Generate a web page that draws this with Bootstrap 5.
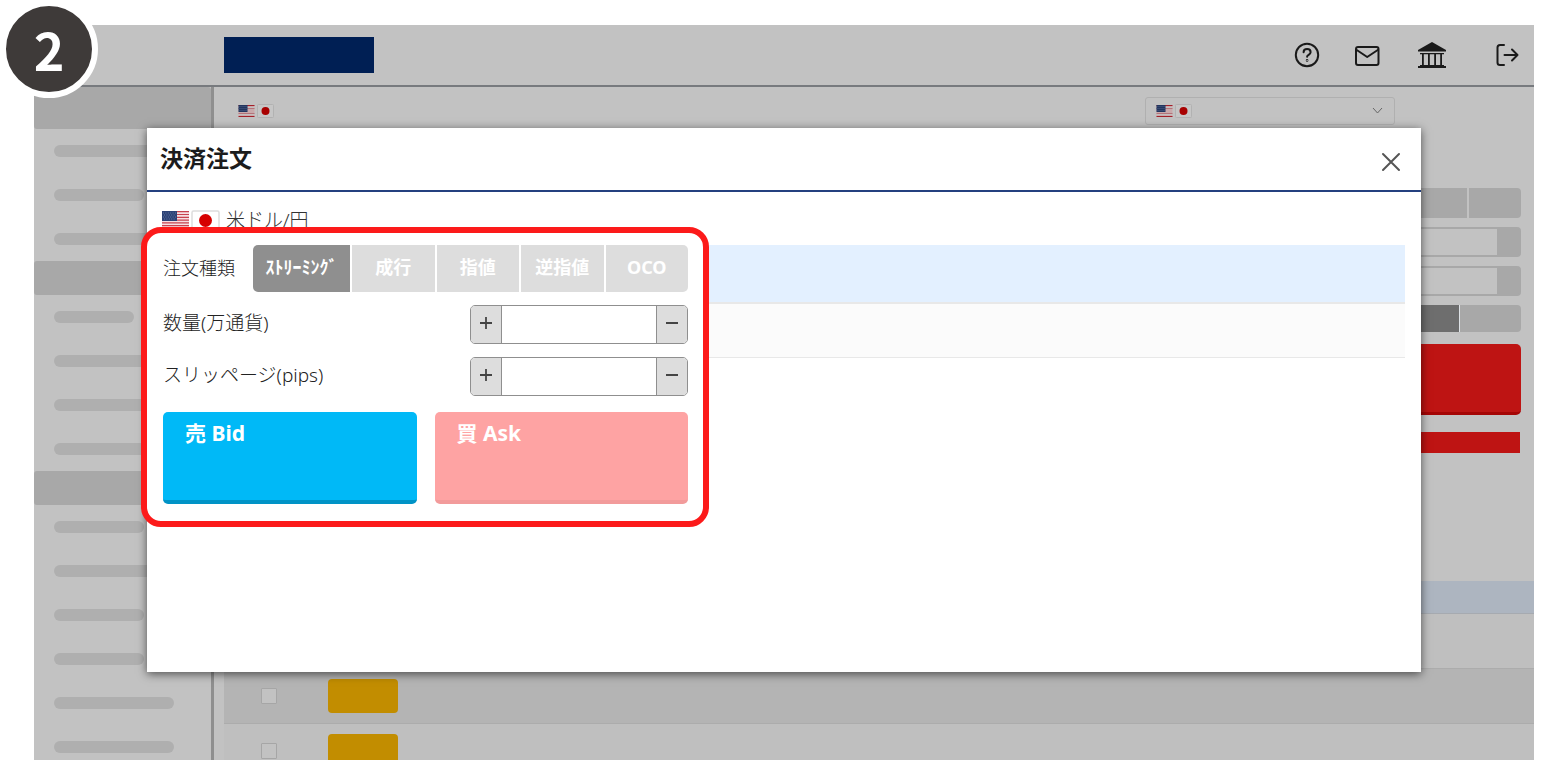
<!DOCTYPE html>
<html lang="ja">
<head>
<meta charset="utf-8">
<meta name="viewport" content="width=device-width, initial-scale=1">
<title>決済注文</title>
<link href="https://cdn.jsdelivr.net/npm/bootstrap@5.3.0/dist/css/bootstrap.min.css" rel="stylesheet">
<style>
  body { background: #fff; color: #333; font-family: "Noto Sans", "Noto Sans CJK JP", sans-serif; font-size: 18px; line-height: 24px; }
  button { font-family: inherit; }
  .stage { height: 100vh; padding: 25px 16px 0 34px; }
  .app { background: #c2c2c2; }
  .app-header { height: 62px; border-bottom: 2px solid #777a7e; padding: 0 15px 0 190px; }
  .brand-block { width: 150px; height: 36px; background: #001f54; }
  .tools { gap: 34px; }
  .tool-icon { color: #1a1a1a; line-height: 0; }
  .tool-bank { margin: 0 15px 0 4px; }

  /* sidebar */
  .side-col { width: 180px; border-right: 3px solid #8f8f8f; }
  .side-head { height: 34px; background: #a8a8a8; border-radius: 3px; }
  .side-head-first { height: 42px; }
  .side-group { gap: 32px; padding: 16px 20px; }
  .side-item { height: 12px; width: 120px; border-radius: 6px; background: #afafaf; }
  .side-item-md { width: 90px; }
  .side-item-sm { width: 80px; }

  /* trading area */
  .pair-bar { height: 48px; padding: 0 139px 0 24px; }
  .flags { gap: 2px; }
  .pair-select { width: 250px; height: 28px; border: 1px solid #b0b0b0; border-radius: 3px; background: transparent; appearance: none; }
  .pair-flags { left: 11px; top: 7px; pointer-events: none; }
  .pair-arrow { right: 12px; top: 10px; line-height: 0; pointer-events: none; }
  .trade-col { width: 300px; padding: 53px 13px 0 0; }
  .trade-body { height: 446px; }
  .trade-row { margin-bottom: 9px; gap: 2px; }
  .seg { background: #a8a8a8; border: 0; height: 30px; }
  .seg-low { height: 27px; }
  .seg-on { background: #6e6e6e; }
  .seg-end { width: 52px; border-radius: 0 4px 4px 0; }
  .seg-end-wide { width: 62px; border-radius: 0 4px 4px 0; }
  .field-row { height: 30px; border: 2px solid #a8a8a8; border-radius: 4px; background: #a8a8a8; padding-right: 22px; }
  .field-row input { border: 0; background: #c2c2c2; }
  .ask-big { height: 71px; border: 0; border-bottom: 3px solid #a50505; border-radius: 5px; background: #be1413; margin: 12px 0 17px; }
  .ask-strip { height: 21px; background: #be1413; margin-right: 1px; }

  /* positions table */
  .pos-wrap { padding-left: 10px; }
  .pos-table { border-collapse: separate; border-spacing: 0; }
  .pos-table th { height: 33px; background: #adb5c0; border-bottom: 1px solid #a6aab0; padding: 0; }
  .pos-table td { height: 55px; background: #bfbfbf; border-bottom: 1px solid #acacac; padding: 0; vertical-align: middle; }
  .pos-table tr:nth-child(even) td { background: #b4b4b4; }
  .pos-check-cell { width: 90px; text-align: center; }
  .pos-check { appearance: none; width: 16px; height: 16px; border: 1px solid #a6a6a6; border-radius: 1px; background: #c2c2c2; display: block; margin: 0 auto; }
  .settle { display: block; width: 70px; height: 34px; border: 0; border-radius: 4px; background: #c28d00; margin-left: 14px; }

  /* dialog over the trading area */
  .dialog { top: 103px; left: 113px; right: 113px; background: #fff; box-shadow: 0 2px 9px rgba(0,0,0,.6); }
  .dialog-head { height: 64px; border-bottom: 2px solid #24407f; padding: 0 20px 0 13px; }
  .dialog-title { font-size: 23px; line-height: 30px; color: #1c1c1c; padding-bottom: 2px; }
  .close-btn { border: 0; background: none; padding: 5px 0 0; line-height: 0; }
  .dialog-body { min-height: 480px; padding: 16px 16px 0 15px; }
  .pair-name { height: 24px; gap: 2px; font-size: 19px; }
  .info-list { margin-top: 13px; }
  .info-row { height: 59px; background: #e3f0ff; border-bottom: 2px solid #e8e8e8; }
  .info-row-plain { height: 54px; background: #fbfbfb; border-bottom-width: 1px; }

  /* highlighted order form */
  .order-form { top: 35px; left: -6px; width: 568px; border: 6px solid #fc1a1a; border-radius: 20px; background: #fff; padding: 12px 15px 17px 16px; }
  .order-row { margin-bottom: 13px; }
  .order-label { color: #222; font-size: 19px; font-weight: 300; padding-bottom: 3px; }
  .order-label-type { font-size: 18px; padding-bottom: 1px; }
  .tabs { width: 435px; gap: 2px; }
  .tab-btn { height: 47px; border: 0; padding: 0 0 3px; background: #ddd; color: #fff; font-weight: 700; }
  .tab-on { flex: 0 0 97px; background: #8f8f8f; border-radius: 5px 0 0 5px; }
  .tab-last { border-radius: 0 5px 5px 0; }
  .stepper { width: 218px; height: 39px; border: 1px solid #8f8f8f; border-radius: 5px; overflow: hidden; }
  .stepper button { flex: 0 0 30px; border: 0; background: #ddd; padding: 0 0 4px; line-height: 0; }
  .stepper input { border: 0; border-left: 1px solid #8f8f8f; border-right: 1px solid #8f8f8f; min-width: 0; }
  .quotes { gap: 18px; margin-top: 16px; }
  .quote-btn { height: 92px; border: 0; border-radius: 5px; color: #fff; font-size: 21px; line-height: 24px; font-weight: 700; padding: 9px 22px; }
  .quote-bid { background: #00b9f7; border-bottom: 4px solid #0093c6; }
  .quote-ask { background: #fea3a3; border-bottom: 4px solid #f29b9b; }

  .step-badge { left: 0; top: 0; width: 98px; height: 98px; border: 6px solid #fff; border-radius: 50%; background: #3e3a39; color: #fff; font: 700 52px/52px "Noto Sans CJK JP", sans-serif; }
</style>
</head>
<body>
<svg width="0" height="0" class="position-absolute" aria-hidden="true">
  <symbol id="us" viewBox="0 0 27 18">
    <rect width="27" height="18" fill="#f6dfe2"/>
    <path d="M0 .7h27M0 3.5h27M0 6.3h27M0 9.1h27M0 11.9h27M0 14.7h27M0 17.4h27" stroke="#c8434f" stroke-width="1.2"/>
    <rect width="15" height="10" fill="#2c4276"/>
    <path d="M1 2h13M2 4h12M1 6h13M2 8h12" stroke="#7485ac" stroke-width=".8" stroke-dasharray="1 1.4"/>
  </symbol>
  <symbol id="us-dim" viewBox="0 0 16 12">
    <rect width="16" height="12" fill="#c9a9ab"/>
    <path d="M0 .5h16M0 11.500h16" stroke="#a32029"/>
    <path d="M0 3.500h16M0 8.500h16" stroke="#b4747a"/>
    <path d="M9 2.500h7M0 9.500h16" stroke="#c4bfc0"/>
    <rect width="9" height="7" fill="#22355f"/>
    <path d="M1 1.500h8M0 3.500h9M1 5.500h8" stroke="#4b5f86" stroke-dasharray="1 1"/>
  </symbol>
</svg>

<div class="stage position-relative overflow-hidden">
  <div class="app position-relative h-100 d-flex flex-column">
    <header class="app-header d-flex align-items-center justify-content-between flex-shrink-0">
      <div class="brand-block"></div>
      <nav class="tools d-flex align-items-center">
        <a href="#" class="tool-icon" aria-label="ヘルプ"><svg width="26" height="26" viewBox="0 0 26 26" fill="none" stroke="currentColor" stroke-width="2" stroke-linecap="round"><circle cx="13" cy="13" r="11.200"/><path d="M9.600 10.200c0-4.200 7-4.200 7 0 0 2.600-3.500 2.500-3.500 4.500"/><circle cx="13.100" cy="18.400" r=".3"/></svg></a>
        <a href="#" class="tool-icon" aria-label="メール"><svg width="26" height="24" viewBox="0 0 26 24" fill="none" stroke="currentColor" stroke-width="2" stroke-linejoin="round"><rect x="2" y="4" width="22.500" height="18" rx="2"/><path d="M2 6.500l11.200 7.500 11.300-7.500"/></svg></a>
        <a href="#" class="tool-icon tool-bank" aria-label="入出金"><svg width="28" height="28" viewBox="0 0 28 28" fill="currentColor"><path d="M14 1L28 9v1.500H0V9zM2 12h24v1.200H2zM4 13h1.800v11H4zM10 13h1.800v11H10zM16.200 13H18v11h-1.800zM22.200 13H24v11h-1.800zM2 24h24v1h2v2H0v-2h2z"/></svg></a>
        <a href="#" class="tool-icon" aria-label="ログアウト"><svg width="24" height="24" viewBox="0 0 24 24" fill="none" stroke="currentColor" stroke-width="2" stroke-linecap="round" stroke-linejoin="round"><path d="M9 2H5Q2.500 2 2.500 4.500v15Q2.500 22 5 22h4M9.500 12h13M17 6.500l5.500 5.500-5.500 5.500"/></svg></a>
      </nav>
    </header>

    <div class="d-flex flex-grow-1 overflow-hidden">
      <aside class="side-col flex-shrink-0">
        <div class="side-head side-head-first"></div>
        <div class="side-group d-flex flex-column">
          <div class="side-item"></div><div class="side-item side-item-md"></div><div class="side-item"></div>
        </div>
        <div class="side-head"></div>
        <div class="side-group d-flex flex-column">
          <div class="side-item side-item-sm"></div><div class="side-item"></div><div class="side-item"></div><div class="side-item"></div>
        </div>
        <div class="side-head"></div>
        <div class="side-group d-flex flex-column">
          <div class="side-item side-item-md"></div><div class="side-item"></div><div class="side-item side-item-md"></div><div class="side-item side-item-md"></div><div class="side-item"></div><div class="side-item"></div>
        </div>
      </aside>

      <main class="flex-grow-1">
        <div class="pair-bar d-flex align-items-center justify-content-between">
          <div class="flags d-flex align-items-center">
            <svg width="17" height="12"><use href="#us-dim"/></svg>
            <svg width="17" height="14" viewBox="0 0 17 14"><rect x=".5" y=".5" width="16" height="13" rx="1" fill="#c6c6c6" stroke="#b2b2b2"/><circle cx="8.500" cy="7" r="4" fill="#a80000"/></svg>
          </div>
          <div class="position-relative">
            <select class="pair-select d-block" aria-label="通貨ペア"><option></option></select>
            <span class="pair-flags flags d-flex align-items-center position-absolute">
              <svg width="17" height="12"><use href="#us-dim"/></svg>
              <svg width="17" height="14" viewBox="0 0 17 14"><rect x=".5" y=".5" width="16" height="13" rx="1" fill="#c6c6c6" stroke="#b2b2b2"/><circle cx="8.500" cy="7" r="4" fill="#a80000"/></svg>
            </span>
            <span class="pair-arrow position-absolute"><svg width="11" height="8" fill="none" stroke="#666"><path d="M1 1l4.500 5L10 1"/></svg></span>
          </div>
        </div>

        <div class="trade-body d-flex justify-content-end">
          <div class="trade-col">
            <div class="trade-row d-flex">
              <button class="seg flex-grow-1" aria-label="指値"></button><button class="seg seg-end" aria-label="逆指値"></button>
            </div>
            <div class="trade-row field-row d-flex"><input class="w-100" aria-label="数量"></div>
            <div class="trade-row field-row d-flex"><input class="w-100" aria-label="スリッページ"></div>
            <div class="d-flex gap-0">
              <button class="seg seg-low seg-on flex-grow-1" aria-label="両建なし"></button><button class="seg seg-low seg-end-wide border-start" aria-label="両建あり"></button>
            </div>
            <button class="ask-big d-block w-100" aria-label="買"></button>
            <div class="ask-strip"></div>
          </div>
        </div>

        <div class="pos-wrap">
          <table class="pos-table w-100">
            <thead><tr><th></th><th></th></tr></thead>
            <tbody>
              <tr><td class="pos-check-cell"><input type="checkbox" class="pos-check" aria-label="選択 1"></td><td><button class="settle" aria-label="決済 1"></button></td></tr>
              <tr><td class="pos-check-cell"><input type="checkbox" class="pos-check" aria-label="選択 2"></td><td><button class="settle" aria-label="決済 2"></button></td></tr>
              <tr><td class="pos-check-cell"><input type="checkbox" class="pos-check" aria-label="選択 3"></td><td><button class="settle" aria-label="決済 3"></button></td></tr>
            </tbody>
          </table>
        </div>
      </main>
    </div>

    <section class="dialog position-absolute" role="dialog" aria-labelledby="dlgTitle">
      <div class="dialog-head d-flex align-items-center justify-content-between">
        <h1 id="dlgTitle" class="dialog-title fw-bold m-0">決済注文</h1>
        <button class="close-btn" aria-label="閉じる"><svg width="20" height="20" stroke="#555" stroke-width="2" stroke-linecap="round"><path d="M2 2l16 16M18 2L2 18"/></svg></button>
      </div>
      <div class="dialog-body position-relative">
        <div class="pair-name d-flex align-items-center fw-light">
          <svg width="27" height="18"><use href="#us"/></svg>
          <svg width="29" height="21" viewBox="0 0 29 21"><rect x="1" y="1" width="27" height="19" rx="1.500" fill="#fff" stroke="#ddd" stroke-width="1.500"/><circle cx="14.500" cy="10.500" r="6.500" fill="#d60000"/></svg>
          <span class="ms-1">米ドル/円</span>
        </div>
        <div class="info-list">
          <div class="info-row"></div>
          <div class="info-row info-row-plain"></div>
        </div>

        <form class="order-form position-absolute">
          <div class="order-row d-flex align-items-center justify-content-between">
            <span id="typeLabel" class="order-label order-label-type">注文種類</span>
            <div class="tabs d-flex" role="group" aria-labelledby="typeLabel">
              <button type="button" class="tab-btn tab-on">ｽﾄﾘｰﾐﾝｸﾞ</button>
              <button type="button" class="tab-btn col">成行</button>
              <button type="button" class="tab-btn col">指値</button>
              <button type="button" class="tab-btn col">逆指値</button>
              <button type="button" class="tab-btn tab-last col">OCO</button>
            </div>
          </div>
          <div class="order-row d-flex align-items-center justify-content-between">
            <label for="qty" class="order-label">数量(万通貨)</label>
            <div class="stepper d-flex">
              <button type="button" aria-label="増やす"><svg width="14" height="14" stroke="#444" stroke-width="1.800"><path d="M1 7h12M7 1v12"/></svg></button>
              <input id="qty" class="flex-grow-1">
              <button type="button" aria-label="減らす"><svg width="14" height="14" stroke="#444" stroke-width="1.800"><path d="M1 7h12"/></svg></button>
            </div>
          </div>
          <div class="order-row d-flex align-items-center justify-content-between">
            <label for="slip" class="order-label">スリッページ(pips)</label>
            <div class="stepper d-flex">
              <button type="button" aria-label="増やす"><svg width="14" height="14" stroke="#444" stroke-width="1.800"><path d="M1 7h12M7 1v12"/></svg></button>
              <input id="slip" class="flex-grow-1">
              <button type="button" aria-label="減らす"><svg width="14" height="14" stroke="#444" stroke-width="1.800"><path d="M1 7h12"/></svg></button>
            </div>
          </div>
          <div class="quotes d-flex">
            <button type="button" class="quote-btn quote-bid col d-flex align-items-start">売 Bid</button>
            <button type="button" class="quote-btn quote-ask col d-flex align-items-start">買 Ask</button>
          </div>
        </form>
      </div>
    </section>
  </div>
  <div class="step-badge position-absolute d-flex align-items-center justify-content-center">2</div>
</div>
<script src="https://cdn.jsdelivr.net/npm/bootstrap@5.3.0/dist/js/bootstrap.bundle.min.js"></script>
</body>
</html>
